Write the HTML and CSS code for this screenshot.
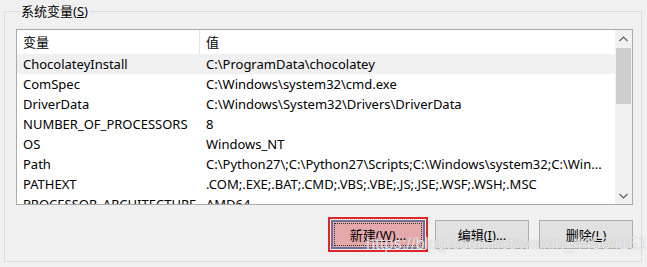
FILE: index.html
```html
<!DOCTYPE html>
<html lang="zh-CN">
<head>
  <meta charset="UTF-8">
  <title>系统变量</title>
  <link rel="stylesheet" href="styles.css">
</head>
<body>

  <fieldset class="group">
    <legend>系统变量(<u>S</u>)</legend>

    <div class="listbox">
      <div class="list">
        <div class="row head">
          <div class="name">变量</div>
          <div class="value">值</div>
        </div>
        <div class="row selected">
          <div class="name">ChocolateyInstall</div>
          <div class="value">C:\ProgramData\chocolatey</div>
        </div>
        <div class="row">
          <div class="name">ComSpec</div>
          <div class="value">C:\Windows\system32\cmd.exe</div>
        </div>
        <div class="row">
          <div class="name">DriverData</div>
          <div class="value">C:\Windows\System32\Drivers\DriverData</div>
        </div>
        <div class="row">
          <div class="name">NUMBER_OF_PROCESSORS</div>
          <div class="value">8</div>
        </div>
        <div class="row">
          <div class="name">OS</div>
          <div class="value">Windows_NT</div>
        </div>
        <div class="row">
          <div class="name">Path</div>
          <div class="value">C:\Python27\;C:\Python27\Scripts;C:\Windows\system32;C:\Win...</div>
        </div>
        <div class="row">
          <div class="name">PATHEXT</div>
          <div class="value">.COM;.EXE;.BAT;.CMD;.VBS;.VBE;.JS;.JSE;.WSF;.WSH;.MSC</div>
        </div>
        <div class="row">
          <div class="name">PROCESSOR_ARCHITECTURE</div>
          <div class="value">AMD64</div>
        </div>
      </div>

      <div class="scrollbar">
        <div class="arrow">
          <svg width="9" height="6" viewBox="0 0 9 6"><path d="M0.5 5 L4.5 1 L8.5 5" fill="none" stroke="#606060" stroke-width="1.2"/></svg>
        </div>
        <div class="track">
          <div class="thumb"></div>
        </div>
        <div class="arrow">
          <svg width="9" height="6" viewBox="0 0 9 6"><path d="M0.5 1 L4.5 5 L8.5 1" fill="none" stroke="#606060" stroke-width="1.2"/></svg>
        </div>
      </div>
    </div>

    <div class="buttons">
      <button class="btn focused"><span>新建(<u>W</u>)...</span></button>
      <button class="btn"><span>编辑(<u>I</u>)...</span></button>
      <button class="btn"><span>删除(<u>L</u>)</span></button>
    </div>
  </fieldset>

  <div class="watermark">https://blog.csdn.net/weixin_44564151</div>

</body>
</html>
```

FILE: styles.css
```css
body {
  margin: 0;
  background: #f0f0f0;
  font-family: "Noto Sans", "Noto Sans CJK SC", sans-serif;
  font-size: 13px;
  color: #000;
  width: 647px;
  height: 267px;
  overflow: hidden;
  position: relative;
}
.group {
  margin: 2px 5px 0 4px;
  padding: 9px 8px 0 11px;
  height: 260px;
  border: 1px solid #dcdcdc;
  box-sizing: border-box;
}
.group legend {
  padding: 0 2px;
  margin-left: 3px;
  line-height: 18px;
}
.listbox {
  display: flex;
  height: 176px;
  border: 1px solid #aaaaaa;
  background: #fff;
  box-sizing: border-box;
}
.list {
  flex: 1;
  overflow: hidden;
}
.row {
  display: flex;
  height: 20px;
  line-height: 20px;
  white-space: nowrap;
}
.row.head {
  height: 24px;
  line-height: 24px;
}
.row.head .name {
  border-right: 1px solid #e5e5e5;
}
.row.selected {
  background: #f0f0f0;
}
.name {
  width: 183px;
  padding-left: 6px;
  box-sizing: border-box;
}
.value {
  padding-left: 6px;
}
.scrollbar {
  width: 17px;
  display: flex;
  flex-direction: column;
  background: #f0f0f0;
}
.arrow {
  height: 17px;
  display: flex;
  align-items: center;
  justify-content: center;
}
.track {
  flex: 1;
  padding: 1px;
}
.thumb {
  height: 56px;
  background: #cdcdcd;
}
.buttons {
  display: flex;
  justify-content: flex-end;
  gap: 10px;
  margin-top: 15px;
}
.btn {
  width: 94px;
  height: 29px;
  padding: 0;
  border: 1px solid #adadad;
  background: #e1e1e1;
  font-family: inherit;
  font-size: 13px;
  color: #000;
}
.btn.focused {
  background: #e6a9ab;
  border: 2px solid #6e7292;
  outline: 2px solid #e0262b;
  outline-offset: 1px;
  padding: 1px;
}
.btn.focused span {
  display: flex;
  height: 100%;
  align-items: center;
  justify-content: center;
  border: 1px dotted #333;
  box-sizing: border-box;
}
.watermark {
  position: absolute;
  left: 366px;
  top: 234px;
  font-family: "Liberation Sans", sans-serif;
  font-size: 16.5px;
  color: rgba(255, 255, 255, 0.75);
  text-shadow: 0 0 1px rgba(120, 120, 120, 0.6);
  white-space: nowrap;
}
```
